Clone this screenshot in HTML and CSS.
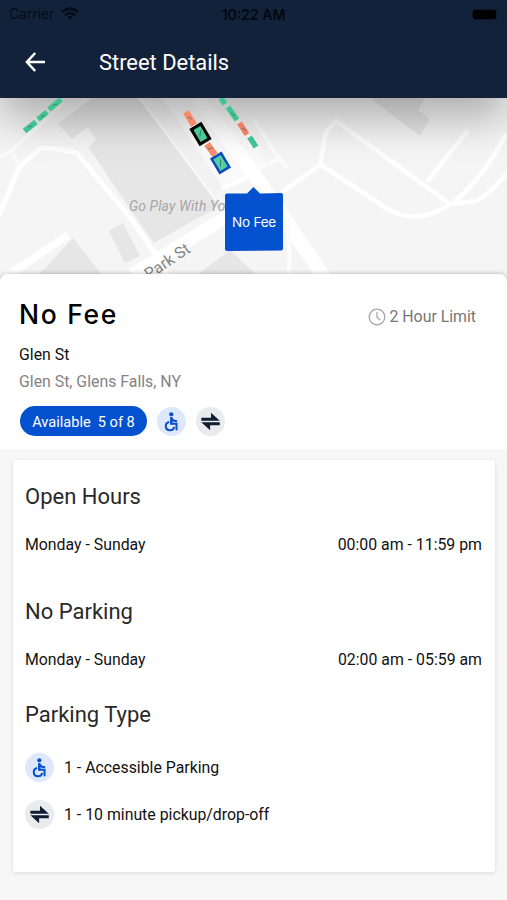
FILE: index.html
```html
<!DOCTYPE html>
<html lang="en">
<head>
    <meta charset="utf-8">
    <title>Street Details</title>
    <link rel="stylesheet" href="styles.css">
</head>
<body>
    <svg class="sprite" width="0" height="0">
        <symbol id="wheelchair" viewBox="0 0 30 30">
            <circle cx="14.8" cy="7.6" r="2.2" fill="currentColor"/>
            <path d="M14.8 10.6V17.4H20.2V24M15.2 12.4Q17 14.6 20.8 14.8M12.6 15.4A4.4 4.4 0 1 0 17.8 20.6" fill="none" stroke="currentColor" stroke-width="2.1"/>
            <path d="M13.6 10.5H16V18H13.6Z" fill="currentColor"/>
        </symbol>
        <symbol id="exchange" viewBox="0 0 30 30">
            <path d="M5.5 11H15.5V6L24.600 14.200H5.500ZM24.600 15.800H5.500L14.600 24V19H24.600Z" fill="currentColor"/>
        </symbol>
    </svg>

    <header class="header">
        <div class="status-bar">
            <div class="carrier">
                <span>Carrier</span>
                <svg width="18" height="14" viewBox="0 0 18 14" fill="none" stroke="currentColor" stroke-width="2.6">
                    <path d="M1 5.1Q9-2 17 5.1M4 8.2Q9 3.6 14 8.2"/>
                    <path d="M9 13L6.2 10.1Q9 7.8 11.8 10.1Z" fill="currentColor" stroke="none"/>
                </svg>
            </div>
            <div class="time">10:22 AM</div>
            <div class="battery-wrap"><div class="battery"></div></div>
        </div>
        <div class="toolbar">
            <svg class="back" width="20" height="20" viewBox="0 0 20 20" fill="none" stroke="#fff" stroke-width="2.5">
                <path d="M10.2 1L1.9 10L10.2 19M2 10H20"/>
            </svg>
            <h1>Street Details</h1>
        </div>
    </header>

    <div class="map">
        <svg width="507" height="182" viewBox="0 98 507 182">
            <rect y="98" width="507" height="182" fill="#f5f5f5"/>
            <!-- blocks -->
            <g fill="#e6e6e6">
                <path d="M92 98H138L222 205L200 217L154 243L130 209L89 148L96 139L88 127L72 139L58 124Z"/>
                <path d="M109 231L123 223L140 256L125 263Z"/>
                <path d="M34 280L73 238L106 280Z"/>
                <path d="M190 280L230 250L262 280Z"/>
                <path d="M370 98H425L418 110L430 119L420 136Z"/>
            </g>
            <path d="M138 98H162L222 187L214 197Z" fill="#f2f2f2"/>
            <path d="M162 98H226L266 160L256 176L226 190Z" fill="#fafafa"/>
            <!-- roads -->
            <g fill="none" stroke="#fff" stroke-linejoin="round">
                <path d="M-4 222L20 166L41 148L56 149L77 153L132 220L156 255L170 280" stroke-width="5"/>
                <path d="M20 166L11 151L64 103M-5 160L11 151" stroke="#fbfbfb" stroke-width="4"/>
                <path d="M4 278L68 235" stroke-width="8"/>
                <path d="M132 275L226 217L250 200" stroke-width="13"/>
                <path d="M140 98L218 203" stroke="#f9f9f9" stroke-width="2.5"/>
                <path d="M222 188L250 176" stroke-width="4"/>
                <path d="M198 98L254 174L326 280" stroke-width="14"/>
                <path d="M254 120L278 157L287 168M257 169L278 159M289 212V280" stroke="#fcfcfc" stroke-width="4"/>
                <path d="M282 192L320 165L326 132L336 121L450 204M321 165L380 204Q403 222 431 214L452 204L476 201Q492 193 509 170M452 204Q484 177 506 134M427 182L468 130" stroke-width="4.5"/>
            </g>
            <text class="place" x="129" y="211">Go Play With Your</text>
            <text class="street" transform="translate(149 280) rotate(-34)">Park St</text>
        </svg>
    </div>

    <div class="pins">
        <svg width="507" height="182" viewBox="0 98 507 182">
            <g fill="none" stroke-width="5.5">
                <path d="M24.5 131L36 122M38 119.5L47 112M49 109.5L61 99.5" stroke="#3fc491"/>
                <path d="M221 98L225 104M228 107L237 120M249.500 137L256 147" stroke="#3fc491"/>
                <path d="M239.500 123L247 134.500" stroke="#ec7f62"/>
                <path d="M186 112L194 125M207 144L215 155" stroke="#f98a69" stroke-width="6.5"/>
            </g>
            <path d="M28 127L32 126M41 116L45 116M53 105L58 104M231 113L235 116M242 128L246 130M188 117L192 119M208 149L213 148" stroke="#55705f" stroke-width=".8"/>
            <g transform="translate(200.500 134) rotate(-31)">
                <rect x="-5.500" y="-8.500" width="11" height="17" fill="#48c997" stroke="#000" stroke-width="3"/>
                <path d="M-2 2L2-3" stroke="#397e64"/>
            </g>
            <g transform="translate(220.500 163) rotate(-31)">
                <rect x="-5.500" y="-8" width="11" height="16" fill="#56cfa4" stroke="#0a4cc0" stroke-width="2.500"/>
                <path d="M-2 3L2-3" stroke="#397e64"/>
            </g>
            <path d="M227 193.500H247L253.500 187L260 193.500L281 193Q283 193 283 195V248.500Q283 250.500 281 250.500L227 251Q225 251 225 249V195.500Q225 193.500 227 193.500Z" fill="#0351ce"/>
            <text class="pin-label" x="254" y="227" text-anchor="middle">No Fee</text>
        </svg>
    </div>

    <main class="sheet">
        <section class="summary">
            <div class="summary-top">
                <h2>No Fee</h2>
                <div class="limit">
                    <svg width="18" height="18" viewBox="0 0 18 18" fill="none" stroke="#a6a6a6" stroke-width="1.3">
                        <circle cx="9" cy="9" r="7.8"/>
                        <path d="M9 4V9.3L12.3 12"/>
                    </svg>
                    <span>2 Hour Limit</span>
                </div>
            </div>
            <div class="name">Glen St</div>
            <div class="address">Glen St, Glens Falls, NY</div>
            <div class="tags">
                <div class="available"><span>Available</span><span>5 of 8</span></div>
                <svg class="badge blue"><use href="#wheelchair"/></svg>
                <svg class="badge grey"><use href="#exchange"/></svg>
            </div>
        </section>

        <section class="card">
            <h3>Open Hours</h3>
            <div class="row"><span>Monday - Sunday</span><span>00:00 am - 11:59 pm</span></div>
            <h3 class="no-parking">No Parking</h3>
            <div class="row"><span>Monday - Sunday</span><span>02:00 am - 05:59 am</span></div>
            <h3 class="type-title">Parking Type</h3>
            <div class="type"><svg class="badge blue"><use href="#wheelchair"/></svg><span>1 - Accessible Parking</span></div>
            <div class="type"><svg class="badge grey"><use href="#exchange"/></svg><span>1 - 10 minute pickup/drop-off</span></div>
        </section>
    </main>
</body>
</html>
```
FILE: styles.css
```css
* {
    box-sizing: border-box;
}

body {
    margin: 0;
    width: 507px;
    height: 900px;
    overflow: hidden;
    display: flex;
    flex-direction: column;
    background: #f7f7f7;
    color: #111;
    font-family: Roboto, sans-serif;
    font-size: 15.85px;
}

h1, h2, h3 {
    margin: 0;
    font-weight: 400;
}

svg {
    display: block;
    flex-shrink: 0;
}

.sprite {
    position: absolute;
}

/* header */
.header {
    height: 98px;
    flex-shrink: 0;
    background: #13223b;
    position: relative;
    z-index: 1;
    box-shadow: 0 20px 44px rgba(0, 0, 0, 0.3);
}

.status-bar {
    height: 28px;
    padding: 0 11px 0 9px;
    display: grid;
    grid-template-columns: 1fr auto 1fr;
    align-items: center;
    color: #03070e;
    font-family: Inter, sans-serif;
    font-size: 13.8px;
}

.carrier {
    display: flex;
    align-items: center;
    gap: 7px;
    color: #060c16;
}

.time {
    position: relative;
    left: 1px;
    font-weight: 600;
    font-size: 14px;
}

.battery-wrap {
    display: flex;
    justify-content: flex-end;
}

.battery {
    width: 23px;
    height: 9px;
    border-radius: 3px;
    background: #000;
    box-shadow: 0 0 2px #000;
}

.toolbar {
    height: 68px;
    padding-left: 25px;
    display: flex;
    align-items: center;
    gap: 54px;
}

.toolbar h1 {
    color: #fff;
    font-size: 21.9px;
}

/* map */
.map {
    height: 176px;
    flex-shrink: 0;
}

.place {
    font: italic 13.8px Roboto, sans-serif;
    letter-spacing: 0.15px;
    fill: #a5a5a5;
}

.street {
    font: 16px Roboto, sans-serif;
    fill: #858585;
}

.pins {
    position: absolute;
    top: 98px;
    left: 0;
    z-index: 2;
}

.pin-label {
    font: 13.5px Inter, sans-serif;
    letter-spacing: -0.2px;
    fill: #fff;
}

/* bottom sheet */
.sheet {
    flex: 1;
    position: relative;
    z-index: 3;
    background: #f7f7f7;
    border-radius: 8px 8px 0 0;
    box-shadow: 0 0 5px rgba(0, 0, 0, 0.3);
}

.summary {
    height: 175px;
    padding: 23px 31px 0 19px;
    background: #fff;
    border-radius: 8px 8px 0 0;
}

.summary-top {
    height: 36px;
    display: flex;
    justify-content: space-between;
    align-items: center;
}

.summary h2 {
    margin-top: -2px;
    color: #000;
    font-family: Inter, sans-serif;
    font-size: 26.5px;
    font-weight: 500;
    letter-spacing: 1.7px;
}

.limit {
    display: flex;
    align-items: center;
    gap: 3px;
    padding-top: 3px;
    color: #767676;
}

.name {
    margin-top: 10px;
    line-height: 24px;
}

.address {
    margin-top: 3px;
    line-height: 24px;
    color: #838383;
}

.tags {
    margin-top: 12px;
    display: flex;
    align-items: center;
}

.available {
    width: 127px;
    height: 30px;
    margin: 0 10px 0 1px;
    padding-top: 1px;
    border-radius: 15px;
    display: flex;
    align-items: center;
    justify-content: center;
    gap: 7px;
    background: #0351ce;
    color: #fff;
    font-size: 14.6px;
}

.badge {
    width: 29px;
    height: 29px;
    border-radius: 50%;
}

.blue {
    background: #dde8fc;
    color: #0b50cb;
}

.grey {
    background: #eaebed;
    color: #111d33;
}

.tags .grey {
    margin-left: 10px;
}

/* details card */
.card {
    height: 412px;
    margin: 11px 12px 0 13px;
    padding: 22px 13px 0 12px;
    background: #fff;
    border-radius: 3px;
    box-shadow: 0 1px 4px rgba(0, 0, 0, 0.12);
}

.card h3 {
    color: #292929;
    font-size: 22px;
    line-height: 30px;
}

.row {
    margin-top: 21px;
    display: flex;
    justify-content: space-between;
    line-height: 24px;
}

.card .no-parking {
    margin-top: 40px;
}

.card .type-title {
    margin-top: 28px;
    margin-bottom: 23px;
}

.type {
    height: 29px;
    margin-bottom: 18px;
    display: flex;
    align-items: center;
    gap: 10px;
}
```
